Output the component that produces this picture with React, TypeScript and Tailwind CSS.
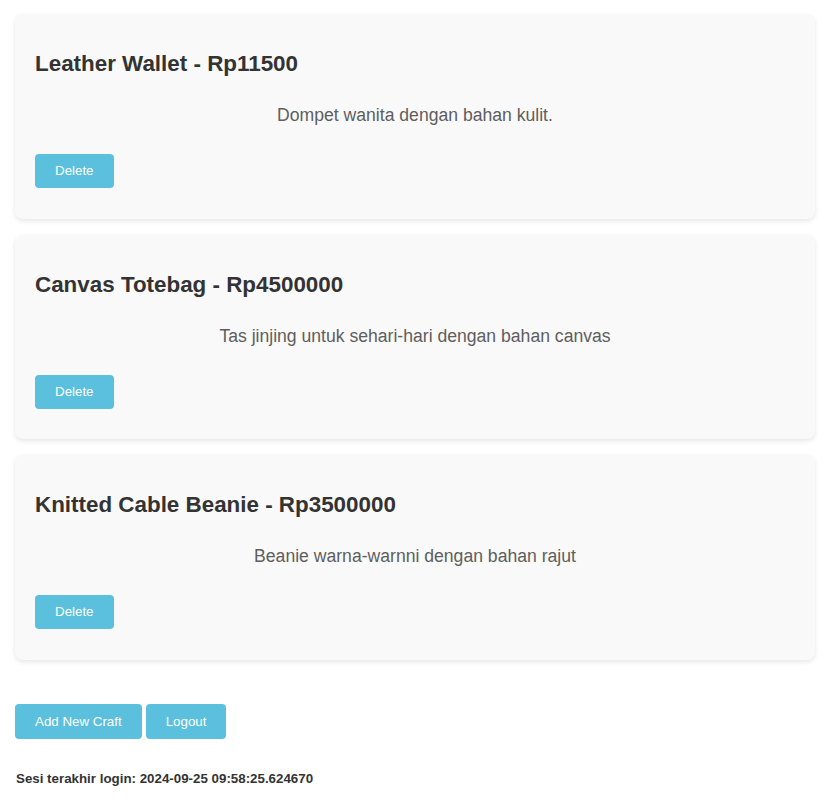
import React from "react";

const crafts = [
  { name: "Leather Wallet", price: "Rp11500", desc: "Dompet wanita dengan bahan kulit." },
  { name: "Canvas Totebag", price: "Rp4500000", desc: "Tas jinjing untuk sehari-hari dengan bahan canvas" },
  { name: "Knitted Cable Beanie", price: "Rp3500000", desc: "Beanie warna-warnni dengan bahan rajut" },
];

export default function App() {
  return (
    <div
      className="min-h-[808px] w-[830px] bg-white"
      style={{ fontFamily: '"Liberation Sans", Arial, sans-serif' }}
    >
      <div className="flex flex-col gap-4 pl-[15px] pt-[14px] w-[815px]">
        {crafts.map((c) => (
          <div
            key={c.name}
            className="flex flex-col items-start rounded-lg bg-[#f9f9f9] px-5 pt-5 pb-[30.5px] shadow-[0_2px_5px_rgba(0,0,0,0.1)]"
          >
            <h2 className="mt-[17px] text-[22.4px] font-bold leading-[26px] text-[#333]">
              {c.name} - {c.price}
            </h2>
            <p className="mt-[28px] w-full text-center text-[17.6px] leading-[20px] text-[#5e5e5e]">
              {c.desc}
            </p>
            <button className="mt-[29px] h-[34px] rounded-[4px] bg-[#5bc0de] px-5 text-[13.33px] text-white">
              Delete
            </button>
          </div>
        ))}
      </div>
      <div className="flex gap-1 pl-[15px] mt-[44.5px]">
        <button className="h-[35px] rounded-[4px] bg-[#5bc0de] px-5 text-[13.33px] text-white">
          Add New Craft
        </button>
        <button className="h-[35px] rounded-[4px] bg-[#5bc0de] px-5 text-[13.33px] text-white">
          Logout
        </button>
      </div>
      <p className="mt-[31.7px] pl-[16px] text-[13.33px] font-bold leading-[16px] text-[#333]">
        Sesi terakhir login: 2024-09-25 09:58:25.624670
      </p>
    </div>
  );
}
